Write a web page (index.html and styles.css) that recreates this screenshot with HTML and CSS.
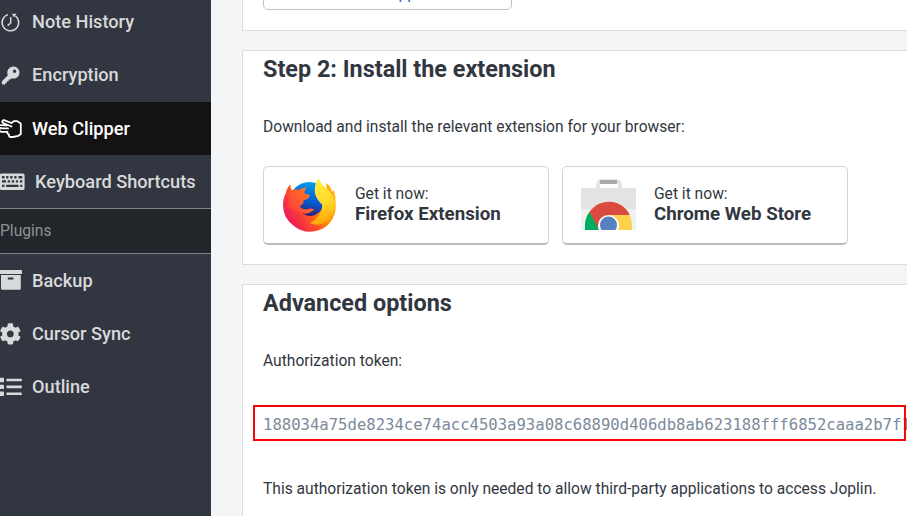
FILE: index.html
```html
<!DOCTYPE html>
<html lang="en">
<head>
<meta charset="utf-8">
<title>Web Clipper options</title>
<link rel="stylesheet" href="styles.css">
</head>
<body>
<div class="app">
  <nav class="sidebar">
    <a class="item raised">
      <svg class="icon" viewBox="0 0 22 22"><g fill="none" stroke="currentColor"><path d="M8 3.600A8.300 8.300 0 1 0 15.500 5" stroke-width="1.500"/><path d="M10.700 6v6L7.600 14.600" stroke-width="1.500"/></g><path d="M11.900 2.700h4.600l-2.600 3.700z" fill="currentColor"/></svg>
      <span>Note History</span></a>
    <a class="item raised">
      <svg class="icon" viewBox="0 0 22 22"><path fill="currentColor" fill-rule="evenodd" d="M13.500 2.600a6 6 0 1 1-1.800 11.700l-1.200 1.200H8.700v1.700H7v1.600H5.500v1.200L4.700 20.500H2.600q-.7 0-.7-.8v-1.800q0-.6.5-1.100L7.900 11.300A6 6 0 0 1 13.500 2.600zM14.600 5.500a1.700 1.700 0 1 0 0 3.400 1.700 1.700 0 0 0 0-3.400z"/></svg>
      <span>Encryption</span></a>
    <a class="item selected">
      <svg class="icon" viewBox="0 0 22 22"><path fill="none" stroke="currentColor" stroke-width="1.800" stroke-linejoin="round" stroke-linecap="round" d="M11.500 8.500 3.200 5C1.600 4.300 2.200 2 4 2.200L11.500 5 13.700 3.100H17L20.800 5.500V16L18.500 17.800 13 19H10.200Q8.500 18.600 9 16.500 6.900 16.200 7.500 13.800H1.500Q-.8 13.600-.5 11.500M8 10.400H2.200L-1 9.700V7L7 7.300"/></svg>
      <span>Web Clipper</span></a>
    <a class="item">
      <svg class="icon keyboard" viewBox="0 0 25 22"><path fill="currentColor" fill-rule="evenodd" d="M1.500 2.500h21.300q1.800 0 1.800 1.700v13.100q0 1.700-1.800 1.700H1.500Q-.5 19-.5 17.300V4.200q0-1.700 2-1.700zM2 5v2.400h2.500V5zm4.200 0v2.400h2.200V5zm4 0v2.400h2.300V5zm4.100 0v2.400h2.200V5zm4.200 0v2.400h3.800V5zM2 9.200v2.400h4V9.200zm5.700 0v2.400H10V9.200zm4 0v2.400h2.400V9.200zm4.200 0v2.400h2V9.200zm4 0v2.400h2.400V9.200zM2 13.800v2.300h2.500v-2.300zm4.200 0v2.300h12.300v-2.300zm14 0v2.300h2.100v-2.300z"/></svg>
      <span>Keyboard Shortcuts</span></a>
    <div class="divider">Plugins</div>
    <a class="item">
      <svg class="icon" viewBox="0 0 22 22"><path fill="currentColor" fill-rule="evenodd" d="M0 0h21q1 0 1 1v3H-.3V0zM1 5h19.800v13.600q0 1.200-1.200 1.200H2.200Q1 19.800 1 18.600zM8.300 7.600q-.5 0-.5.5v1q0 .5.5.5H13q.5 0 .5-.5v-1q0-.5-.5-.5z"/></svg>
      <span>Backup</span></a>
    <a class="item">
      <svg class="icon" viewBox="0 0 22 22"><path fill="currentColor" transform="translate(-.6 0) scale(.0427)" d="M487.400 315.700l-42.600-24.600c4.300-23.200 4.300-47 0-70.200l42.600-24.600c4.900-2.800 7.100-8.600 5.500-14-11.100-35.600-30-67.800-54.700-94.600-3.800-4.100-10-5.100-14.800-2.300L380.800 110c-17.900-15.400-38.500-27.300-60.800-35.100V25.800c0-5.600-3.900-10.500-9.400-11.700-36.700-8.200-74.300-7.800-109.200 0-5.500 1.200-9.400 6.100-9.400 11.700V75c-22.200 7.900-42.800 19.800-60.800 35.100L88.700 85.500c-4.900-2.800-11-1.900-14.800 2.300-24.700 26.700-43.600 58.900-54.700 94.600-1.700 5.400.6 11.200 5.500 14L67.300 221c-4.300 23.200-4.300 47 0 70.200l-42.600 24.600c-4.900 2.800-7.100 8.600-5.500 14 11.100 35.600 30 67.800 54.700 94.600 3.800 4.100 10 5.100 14.800 2.300l42.600-24.600c17.900 15.400 38.500 27.300 60.800 35.100v49.200c0 5.600 3.900 10.500 9.400 11.700 36.700 8.200 74.300 7.800 109.200 0 5.500-1.200 9.400-6.100 9.400-11.700v-49.200c22.200-7.900 42.800-19.800 60.800-35.100l42.600 24.600c4.900 2.800 11 1.900 14.800-2.300 24.700-26.700 43.600-58.900 54.700-94.600 1.500-5.500-.7-11.300-5.600-14.100zM256 336c-44.100 0-80-35.900-80-80s35.900-80 80-80 80 35.900 80 80-35.900 80-80 80z"/></svg>
      <span>Cursor Sync</span></a>
    <a class="item">
      <svg class="icon" viewBox="0 0 22 22"><g fill="currentColor"><rect x="-1" y="1.800" width="5" height="4.400" rx=".7"/><rect x="-1" y="8.700" width="5" height="4.400" rx=".7"/><rect x="-1" y="15.600" width="5" height="4.400" rx=".7"/><rect x="6.400" y="2.700" width="15.400" height="2.600" rx=".6"/><rect x="6.400" y="9.600" width="15.400" height="2.600" rx=".6"/><rect x="6.400" y="16.500" width="15.400" height="2.600" rx=".6"/></g></svg>
      <span>Outline</span></a>
  </nav>
  <main class="content">
    <section class="card first"><button class="toggle">Disable Web Clipper Service</button></section>
    <section class="card install">
      <h1>Step 2: Install the extension</h1>
      <p>Download and install the relevant extension for your browser:</p>
      <div class="stores">
        <a class="store">
          <svg class="logo" viewBox="0 0 56 56">
            <defs>
              <linearGradient id="body" x1=".9" y1=".2" x2=".1" y2=".7"><stop offset="0" stop-color="#ffbd19"/><stop offset=".35" stop-color="#ff9500"/><stop offset=".65" stop-color="#ff4e27"/><stop offset="1" stop-color="#ed1e55"/></linearGradient>
              <linearGradient id="globe" x1=".6" y1="0" x2=".4" y2=".85"><stop offset="0" stop-color="#00a0ec"/><stop offset=".55" stop-color="#075bd0"/><stop offset="1" stop-color="#321370"/></linearGradient>
              <linearGradient id="flame" x1=".4" y1="0" x2=".6" y2="1"><stop offset="0" stop-color="#fff044"/><stop offset=".6" stop-color="#ffd526"/><stop offset="1" stop-color="#ff9e00"/></linearGradient>
              <linearGradient id="head" x1="1" y1="0" x2="0" y2=".8"><stop offset="0" stop-color="#ff8b16"/><stop offset="1" stop-color="#ff3b40"/></linearGradient>
            </defs>
            <path fill="#ffae12" d="M44 6q5 3 6 9l2-2q.5 6 2 8l-8 3z"/>
            <circle cx="27.500" cy="25.500" r="20.500" fill="url(#globe)"/>
            <path fill="url(#body)" d="M8.500 7.500Q8 11 9 15L17 31Q20 39 29 39 40 37 41 27L45 12Q50 15 50 19L52 17Q55 27 53 36 48 51 34 54 22 57 12 49 1 41 1 28 1 21 4 16 4.500 11 8.500 7.500z"/>
            <path fill="url(#head)" d="M8.500 7.500Q8 11 10 13 14 11.500 17 13 20 10 25 10.500 22 13 22.500 16.500L28 18Q27 22 21.500 23.500 22 26 20 28 17 28 19 31 22 33 26 32 30 30.500 32.500 33 30 34 27 36 22 38 17 35L5 30z"/>
            <path fill="url(#flame)" d="M36.500 1Q38 6 44 11 51 17 53 27 52 39 44 45 36 50 28 46 40 40 40.500 28 34 22 33 16 32 7 36.500 1z"/>
          </svg>
          <span class="label">Get it now:<strong>Firefox Extension</strong></span></a>
        <a class="store">
          <svg class="logo" viewBox="0 0 56 56">
            <defs><clipPath id="bag"><path d="M0 11h55v40q0 2-2 2H2q-2 0-2-2z"/></clipPath></defs>
            <path d="M17 12V8q0-4 4-4h14q4 0 4 4v4" fill="none" stroke="#e0e1e3" stroke-width="3.500"/><path d="M19 3h17v4H19z" fill="#aaa"/>
            <g clip-path="url(#bag)"><path fill="#e1e3e5" d="M0 11h55v21H0z"/><path fill="#f0f1f3" d="M0 32h55v21H0z"/>
            <circle cx="27.500" cy="48.500" r="23.500" fill="#ffd24d"/><path fill="#db4a3f" d="M27.500 48.500 17 54 8.500 35A23.500 23.500 0 0 1 49 38H27.500z"/><path fill="#00ac62" d="M8.500 35 19 54H4V48q0-7 4.500-13z"/><circle cx="27.500" cy="48.500" r="10.500" fill="#fff"/><circle cx="27.500" cy="48" r="8.500" fill="#587fc0"/></g>
          </svg>
          <span class="label">Get it now:<strong>Chrome Web Store</strong></span></a>
      </div>
    </section>
    <section class="card advanced">
      <h1>Advanced options</h1>
      <p>Authorization token:</p>
      <div class="token">188034a75de8234ce74acc4503a93a08c68890d406db8ab623188fff6852caaa2b7f1<span class="highlight"></span></div>
      <p>This authorization token is only needed to allow third-party applications to access Joplin.</p>
    </section>
  </main>
</div>
</body>
</html>
```
FILE: styles.css
```css
* { box-sizing: border-box; }
body { margin: 0; font: 15.6px/20px Roboto, sans-serif; color: #32373f; background: #f4f5f6; }
.app { display: flex; width: 907px; height: 516px; overflow: hidden; }
.sidebar { flex: none; width: 211px; background: #313640; color: #d8d9da; margin-top: -4px; height: 520px; }
.item { display: flex; align-items: center; height: 53px; gap: 10px; font-size: 18.2px; font-weight: 500; white-space: nowrap; }
.item.raised { padding-bottom: 2px; }
.item.selected { background: #131313; color: #fff; }
.icon { flex: none; width: 22px; height: 22px; }
.icon.keyboard { width: 25px; }
.divider { display: flex; align-items: center; height: 46px; border-top: 1px solid #7e8187; border-bottom: 1px solid #7e8187; background: #22252a; color: #8f9194; }
.content { flex: 1; min-width: 0; margin-left: 31px; display: flex; flex-direction: column; gap: 19px; }
.card { flex: none; background: #fff; border: 1px solid #ddd; border-right: 0; padding: 0 20px; }
.first { height: 31px; border-top: 0; }
.toggle { display: flex; align-items: center; justify-content: center; width: 249px; height: 36px; margin: -26px 0 0; border: 1px solid #c0c2c4; border-radius: 5px; background: #fff; color: #2b60d0; font: 15.6px Roboto, sans-serif; padding: 4px 0 0; }
.install { height: 215px; }
.advanced { height: 260px; }
h1 { margin: 0; padding-top: 3px; font-size: 23.4px; line-height: 30px; font-weight: 700; }
p { margin: 0; white-space: nowrap; }
h1 + p { margin-top: 33px; }
.stores { display: flex; gap: 13px; margin-top: 29px; }
.store { display: flex; align-items: center; width: 286px; height: 79px; padding-left: 18px; gap: 17px; border: 1px solid #d4d4d6; border-bottom: 2px solid #b9babc; border-radius: 5px; }
.logo { width: 56px; height: 56px; flex: none; }
.label { display: flex; flex-direction: column; margin-top: -3px; }
.label strong { font-size: 18.72px; }
.token { position: relative; margin: 44px 0; font: 15.6px/20px "DejaVu Sans Mono", monospace; color: #7b8a9b; white-space: nowrap; }
.highlight { position: absolute; left: -10px; top: -10px; width: 653px; height: 36px; border: 2px solid #f80505; }
```
